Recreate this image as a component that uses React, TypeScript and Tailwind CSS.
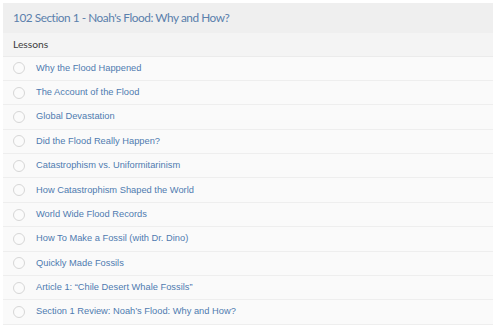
import React from 'react';

const lessons = [
  'Why the Flood Happened',
  'The Account of the Flood',
  'Global Devastation',
  'Did the Flood Really Happen?',
  'Catastrophism vs. Uniformitarinism',
  'How Catastrophism Shaped the World',
  'World Wide Flood Records',
  'How To Make a Fossil (with Dr. Dino)',
  'Quickly Made Fossils',
  'Article 1: \u201cChile Desert Whale Fossils\u201d',
  'Section 1 Review: Noah\u2019s Flood: Why and How?',
];

export default function App() {
  return (
    <div className="w-[499px] h-[334px] bg-white pt-[3px] px-[3px] overflow-hidden">
      <div className="w-[490px] bg-[#fafafa]">
        <div className="h-[30px] bg-[#efefef] flex items-center pl-[10px]">
          <h2 className="text-[11.8px] tracking-[-0.45px] text-[#5a80ac]" style={{ fontFamily: 'Lato, "Open Sans", sans-serif' }}>
            102 Section 1 - Noah's Flood: Why and How?
          </h2>
        </div>
        <div
          className="h-[23.5px] bg-[#f4f4f4] border-b border-[#ebebeb] flex items-center pl-[10px] text-[10.3px] text-[#3d3d3d]"
          style={{ fontFamily: 'Lato, "Open Sans", sans-serif' }}
        >
          Lessons
        </div>
        <ul style={{ fontFamily: '"Liberation Sans", Arial, sans-serif' }}>
          {lessons.map((title) => (
            <li key={title} className="h-[24.4px] border-b border-[#eeeeee] flex items-center pl-[9.5px]">
              <span className="w-[12px] h-[12px] rounded-full border-[1.5px] border-[#d6d6d6] bg-[#fbfbfb] shrink-0" />
              <a className="ml-[11.5px] text-[9.3px] text-[#4f7bb0] leading-none">{title}</a>
            </li>
          ))}
        </ul>
      </div>
    </div>
  );
}
